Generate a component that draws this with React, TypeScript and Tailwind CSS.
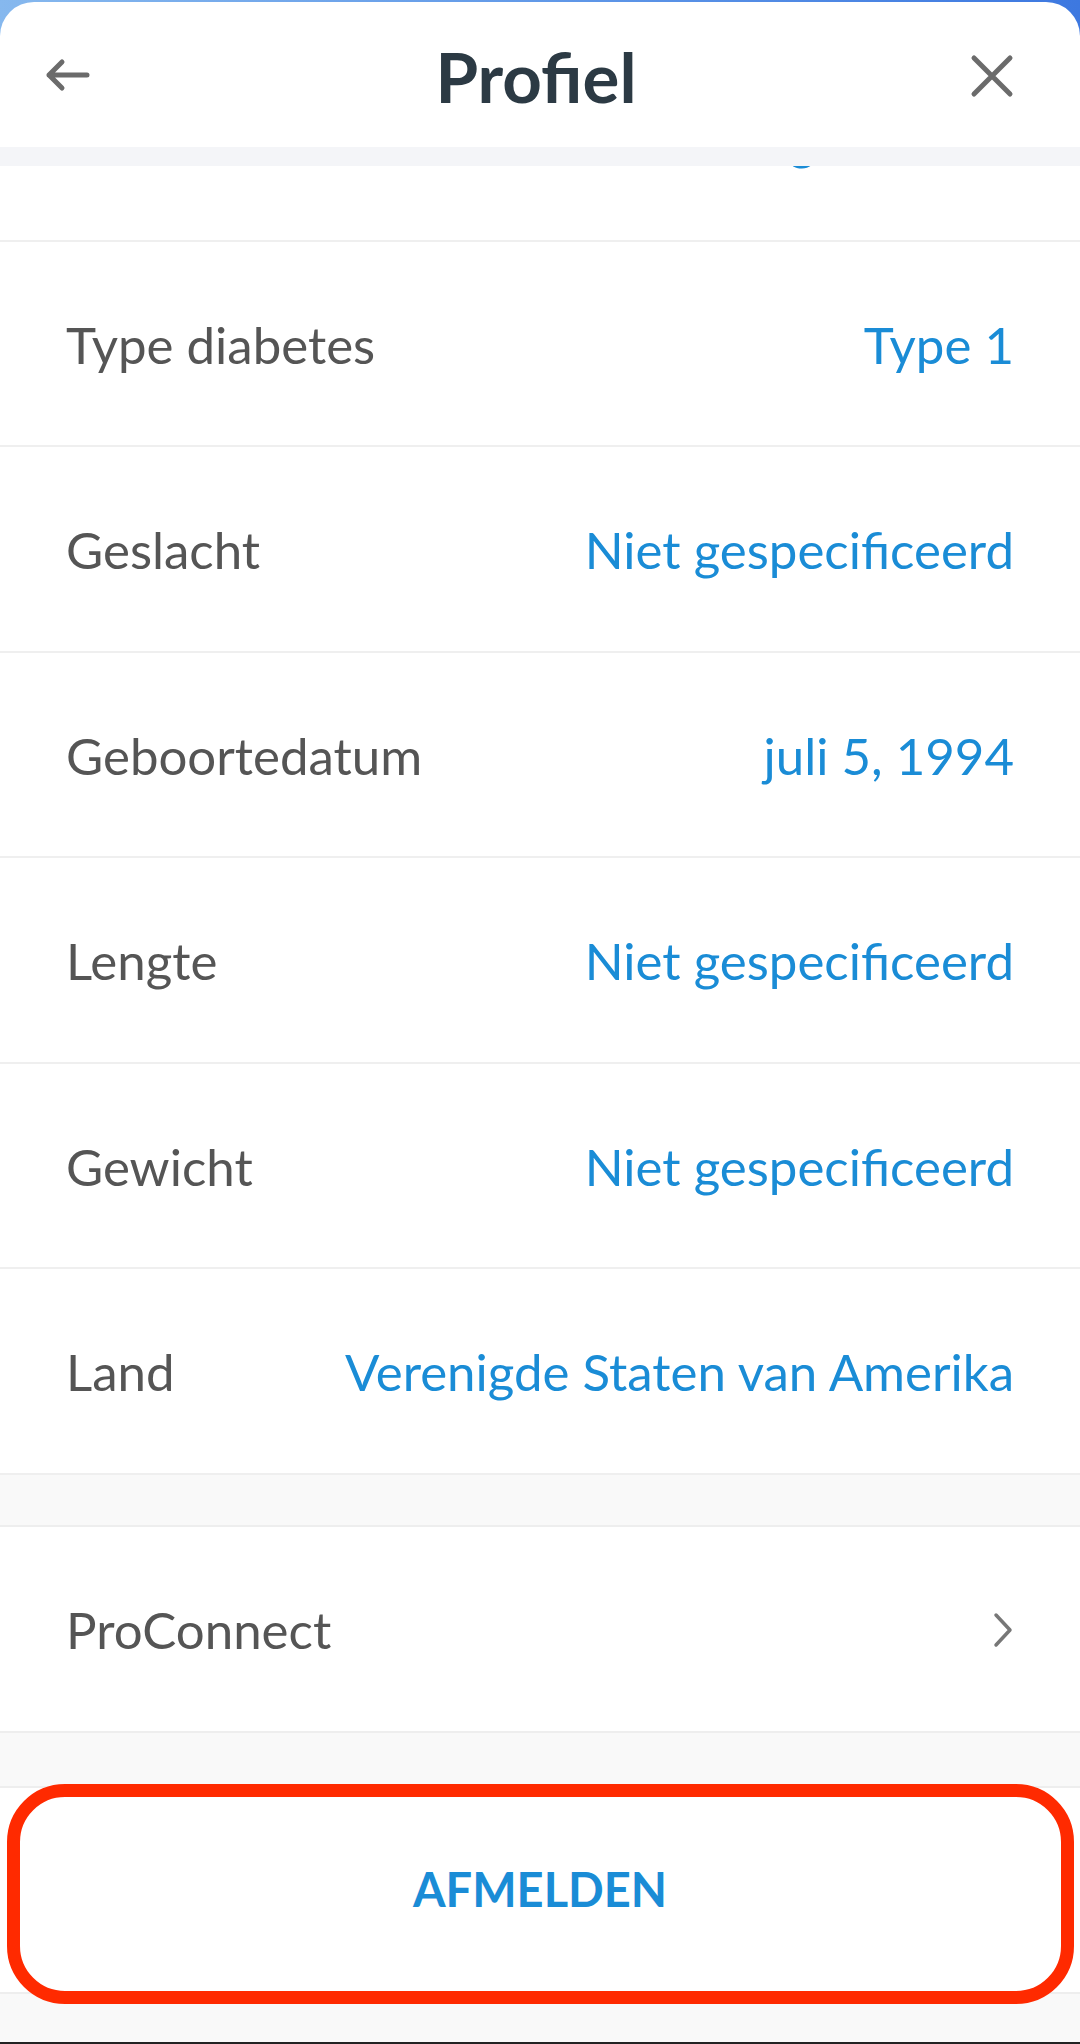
import React from 'react';

const rows = [
  { label: 'E-mailadres', value: 'demo@gmail.com' },
  { label: 'Type diabetes', value: 'Type 1' },
  { label: 'Geslacht', value: 'Niet gespecificeerd' },
  { label: 'Geboortedatum', value: 'juli 5, 1994' },
  { label: 'Lengte', value: 'Niet gespecificeerd' },
  { label: 'Gewicht', value: 'Niet gespecificeerd' },
  { label: 'Land', value: 'Verenigde Staten van Amerika' },
];

const BackIcon = () => (
  <svg width="46" height="34" viewBox="0 0 46 34" fill="none">
    <path d="M43 17H5M18 4L5 17l13 13" stroke="#6b6b6b" strokeWidth="5" strokeLinecap="round" strokeLinejoin="round" />
  </svg>
);

const CloseIcon = () => (
  <svg width="44" height="44" viewBox="0 0 44 44" fill="none">
    <path d="M4 4l36 36M40 4L4 40" stroke="#6b6b6b" strokeWidth="5" strokeLinecap="round" />
  </svg>
);

const Chevron = () => (
  <svg width="22" height="36" viewBox="0 0 22 36" fill="none">
    <path d="M4 3l14 15L4 33" stroke="#777777" strokeWidth="3.5" strokeLinecap="round" strokeLinejoin="round" />
  </svg>
);

export default function App() {
  return (
    <div
      className="w-[1080px] h-[2044px] overflow-hidden flex flex-col bg-gradient-to-r from-[#86b8ee] to-[#3d78e0]"
      style={{ fontFamily: 'Lato, "Open Sans", sans-serif' }}
    >
      <div className="mt-[2px] flex-1 min-h-0 bg-white rounded-t-[34px] overflow-hidden flex flex-col">
        {/* Header */}
        <header className="h-[145px] shrink-0 grid grid-cols-[1fr_auto_1fr] items-center px-[44px]">
          <div className="flex items-center">
            <BackIcon />
          </div>
          <h1 className="text-[69px] font-bold text-[#2c3a44] leading-none pt-[4px] pr-[8px]">Profiel</h1>
          <div className="flex items-center justify-end pr-[22px] pt-[2px]">
            <CloseIcon />
          </div>
        </header>
        <div className="h-[19px] shrink-0 bg-[#f4f5f8]" />

        {/* List */}
        <div className="flex-1 min-h-0 overflow-hidden bg-[#f9f9f9]">
          <div className="-mt-[128px]">
            <div className="bg-white">
              {rows.map((r, i) => (
                <div
                  key={r.label}
                  className={
                    i === 0
                      ? 'h-[203.5px] flex items-center justify-between px-[66px] pt-[2px] border-b-2 border-[#efefef]'
                      : 'h-[205.5px] flex items-center justify-between px-[66px] pt-[3px] border-b-2 border-[#efefef]'
                  }
                >
                  <span className="text-[51px] text-[#555555]">{r.label}</span>
                  <span className="text-[51px] text-[#1a8cd6]">{r.value}</span>
                </div>
              ))}
            </div>

            <div className="h-[52px] bg-[#f9f9f9] border-b-2 border-[#eeeeee]" />

            <div className="h-[206px] bg-white flex items-center justify-between px-[66px] pt-[3px] border-b-2 border-[#eeeeee]">
              <span className="text-[51px] text-[#555555]">ProConnect</span>
              <Chevron />
            </div>

            <div className="h-[55px] bg-[#f9f9f9] border-b-2 border-[#eeeeee]" />

            <div className="relative h-[206px] bg-white flex items-center justify-center border-b-2 border-[#eeeeee]">
              <span className="text-[47px] font-bold text-[#1a8cd6]">AFMELDEN</span>
              <div className="absolute z-10 -top-[4px] -bottom-[12px] left-[7px] right-[6px] border-[13px] border-[#ff2a00] rounded-[58px] pointer-events-none" />
            </div>
          </div>
        </div>
        <div className="h-[2px] shrink-0 bg-[#222222]" />
      </div>
    </div>
  );
}
